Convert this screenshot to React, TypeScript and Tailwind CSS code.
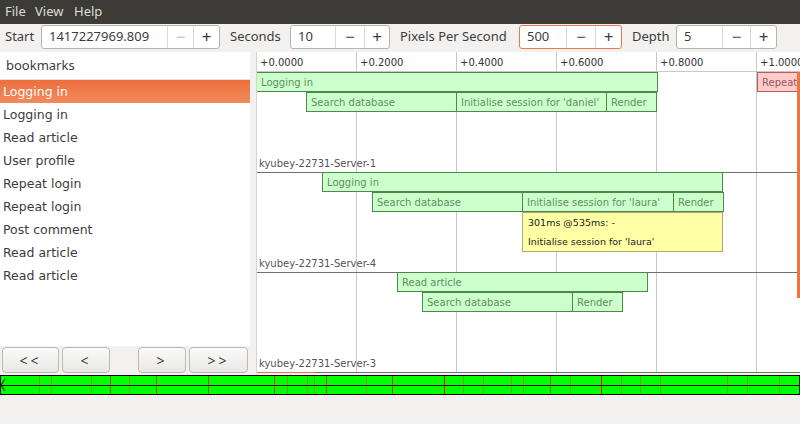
import React from 'react';

const ui = { fontFamily: '"Noto Sans", "DejaVu Sans", sans-serif' };
const dv = { fontFamily: '"DejaVu Sans", "Noto Sans", sans-serif' };

type Ev = { label: string; left: number; top: number; width: number; warn?: boolean };

const events: Ev[] = [
  { label: 'Logging in', left: -1, top: 20, width: 402 },
  { label: 'Search database', left: 49, top: 40, width: 151 },
  { label: "Initialise session for 'daniel'", left: 199, top: 40, width: 151 },
  { label: 'Render', left: 349, top: 40, width: 51 },
  { label: 'Repeat login', left: 500, top: 20, width: 120, warn: true },
  { label: 'Logging in', left: 65, top: 120, width: 401 },
  { label: 'Search database', left: 115, top: 140, width: 151 },
  { label: "Initialise session for 'laura'", left: 265, top: 140, width: 152 },
  { label: 'Render', left: 416, top: 140, width: 51 },
  { label: 'Read article', left: 140, top: 220, width: 251 },
  { label: 'Search database', left: 165, top: 240, width: 151 },
  { label: 'Render', left: 315, top: 240, width: 51 },
  { label: 'Post comment', left: 366, top: 320, width: 300 },
];

const groups = [
  { name: 'kyubey-22731-Server-1', top: 120 },
  { name: 'kyubey-22731-Server-4', top: 220 },
  { name: 'kyubey-22731-Server-3', top: 320 },
];

const bookmarks = [
  'Logging in',
  'Logging in',
  'Read article',
  'User profile',
  'Repeat login',
  'Repeat login',
  'Post comment',
  'Read article',
  'Read article',
];

const overviewLines: [number, string][] = [
  [39, '#7b9a1c'], [51, '#7b9a1c'], [91, '#7b9a1c'], [110, '#c0401a'], [129, '#7b9a1c'],
  [156, '#c0401a'], [208, '#c0401a'], [274, '#c0401a'], [287, '#7b9a1c'], [307, '#7b9a1c'],
  [314, '#7b9a1c'], [326, '#c0401a'], [366, '#7b9a1c'], [392, '#c0401a'], [444, '#ff0000'],
  [463, '#7b9a1c'], [483, '#7b9a1c'], [511, '#7b9a1c'], [523, '#7b9a1c'], [550, '#a85a1a'],
  [570, '#7b9a1c'], [601, '#ff0000'], [621, '#7b9a1c'], [640, '#7b9a1c'], [660, '#7b9a1c'],
  [727, '#7b9a1c'], [747, '#7b9a1c'], [779, '#7b9a1c'],
];

function SpinBox({ value, inputW, minusW, plusW, focused, minusDisabled }: {
  value: string; inputW: number; minusW: number; plusW: number; focused?: boolean; minusDisabled?: boolean;
}) {
  return (
    <div
      className={`flex h-[24px] rounded-[3px] border bg-white overflow-hidden ${
        focused ? 'border-[#f07746]' : 'border-[#b6b4ae]'
      }`}
    >
      <div className="flex items-center pl-[7px] text-[13px] text-[#3c3c3c]" style={{ width: inputW }}>
        {value}
      </div>
      <div
        className={`flex items-center justify-center border-l border-[#dcdad5] text-[17px] ${
          minusDisabled ? 'text-[#b8b8b8]' : 'text-[#3c3c3c]'
        }`}
        style={{ width: minusW }}
      >
        −
      </div>
      <div
        className="flex items-center justify-center border-l border-[#dcdad5] text-[17px] text-[#3c3c3c]"
        style={{ width: plusW }}
      >
        +
      </div>
    </div>
  );
}

function NavButton({ label, w }: { label: string; w: number }) {
  return (
    <div
      className="flex h-[26px] items-center justify-center rounded-[4px] border border-[#bcbab4] bg-gradient-to-b from-[#fafaf9] to-[#e9e8e6] text-[14px] tracking-[3px] text-[#3c3c3c]"
      style={{ width: w }}
    >
      {label}
    </div>
  );
}

function Timeline() {
  const grid = [100, 200, 300, 400, 500];
  return (
    <div className="relative flex-1 overflow-hidden border-l border-[#d6d4d0] bg-white" style={dv}>
      {/* ruler */}
      <div className="h-[20px] border-b border-[#c8c8c8]" />
      {[0, ...grid].map((x, i) => (
        <div key={x} className="absolute top-[1px] text-[10px] leading-[20px] text-[#333]" style={{ left: x + 3 }}>
          +{(i * 0.2).toFixed(4)}
        </div>
      ))}
      {grid.map((x) => (
        <div key={x} className="absolute top-0 bottom-0 w-px bg-[#c8c8c8]" style={{ left: x - 1 }} />
      ))}

      {/* group labels */}
      {groups.map((g) => (
        <React.Fragment key={g.name}>
          <div className="absolute left-0 right-0 h-px bg-[#707070]" style={{ top: g.top }} />
          <div className="absolute left-[2px] text-[10px] leading-[12px] text-[#555]" style={{ top: g.top - 14 }}>
            {g.name}
          </div>
        </React.Fragment>
      ))}

      {/* events */}
      {events.map((e, i) => (
        <div
          key={i}
          className={`absolute h-[20px] overflow-hidden whitespace-nowrap border pl-[4px] pt-[1px] text-[10px] leading-[17px] ${
            e.warn
              ? 'border-[#b85c5c] bg-[#ffcccc] text-[#9a5a5a]'
              : 'border-[#4a8a4a] bg-[#ccffcc] text-[#5f8f5f]'
          }`}
          style={{ left: e.left, top: e.top, width: e.width }}
        >
          {e.label}
        </div>
      ))}

      {/* tooltip */}
      <div
        className="absolute flex h-[40px] w-[201px] flex-col border border-[#a8a878] bg-[#ffffa6] pl-[5px] text-[9.5px] text-[#222]"
        style={{ left: 265, top: 160 }}
      >
        <div className="leading-[20px]">301ms @535ms: -</div>
        <div className="leading-[18px]">Initialise session for 'laura'</div>
      </div>

      {/* selection markers */}
      <div className="absolute right-0 top-[20px] h-[226px] w-[3px] bg-[#ef7442]" />
      <div className="absolute left-0 top-[320px] h-[3px] w-[58px] bg-[#ef7442]" />
    </div>
  );
}

function Overview() {
  return (
    <svg width="800" height="20" className="block">
      <rect x="0.5" y="0.5" width="799" height="19" fill="#00ff00" stroke="#000" />
      {overviewLines.map(([x, c]) => (
        <line key={x} x1={x + 0.5} x2={x + 0.5} y1="1" y2="19" stroke={c} strokeWidth="1" />
      ))}
      <line x1="0" x2="800" y1="10.5" y2="10.5" stroke="#000" />
      <path d="M5 4 L1 10 L5 16" fill="none" stroke="#000" strokeWidth="1" />
    </svg>
  );
}

export default function App() {
  return (
    <div className="flex h-[424px] w-[800px] flex-col overflow-hidden bg-[#f2f1f0]" style={ui}>
      {/* Menu bar */}
      <div className="flex h-[24px] items-center bg-[#3c3b37] pl-[5px] text-[13px] text-[#dfdbd2]">
        <span className="w-[30px]">File</span>
        <span className="w-[39px]">View</span>
        <span>Help</span>
      </div>

      {/* Toolbar */}
      <div className="flex h-[26px] items-center pl-[5px] text-[13px] text-[#3c3c3c]">
        <span className="w-[36px]">Start</span>
        <SpinBox value="1417227969.809" inputW={125} minusW={26} plusW={26} minusDisabled />
        <span className="ml-[10px] w-[60px]">Seconds</span>
        <SpinBox value="10" inputW={44} minusW={29} plusW={25} />
        <span className="ml-[10px] w-[119px]">Pixels Per Second</span>
        <SpinBox value="500" inputW={46} minusW={29} plusW={26} focused />
        <span className="ml-[10px] w-[44px]">Depth</span>
        <SpinBox value="5" inputW={45} minusW={28} plusW={26} />
      </div>

      {/* Main area */}
      <div className="mt-[2px] flex h-[321px]">
        <div className="flex w-[250px] flex-col">
          <div className="flex h-[28px] items-center border-b border-[#e4e2de] bg-white pl-[6px] text-[13px] text-[#3c3c3c]">
            bookmarks
          </div>
          <div className="flex h-[266px] flex-col bg-white" style={dv}>
            {bookmarks.map((b, i) => (
              <div
                key={i}
                className={`flex h-[23px] items-center pl-[3px] pt-[2px] text-[12.5px] ${
                  i === 0 ? 'bg-gradient-to-b from-[#ec6f3c] to-[#f38a5c] text-white' : 'text-[#3c3c3c]'
                }`}
              >
                {b}
              </div>
            ))}
          </div>
          <div className="mt-auto flex h-[26px] items-center pl-[2px]">
            <NavButton label="<<" w={57} />
            <div className="ml-[3px]"><NavButton label="<" w={48} /></div>
            <div className="ml-[28px]"><NavButton label=">" w={48} /></div>
            <div className="ml-[3px]"><NavButton label=">>" w={59} /></div>
          </div>
        </div>
        <div className="w-[6px]" />
        <Timeline />
      </div>

      {/* Overview */}
      <div className="mt-[2px]">
        <Overview />
      </div>
    </div>
  );
}
